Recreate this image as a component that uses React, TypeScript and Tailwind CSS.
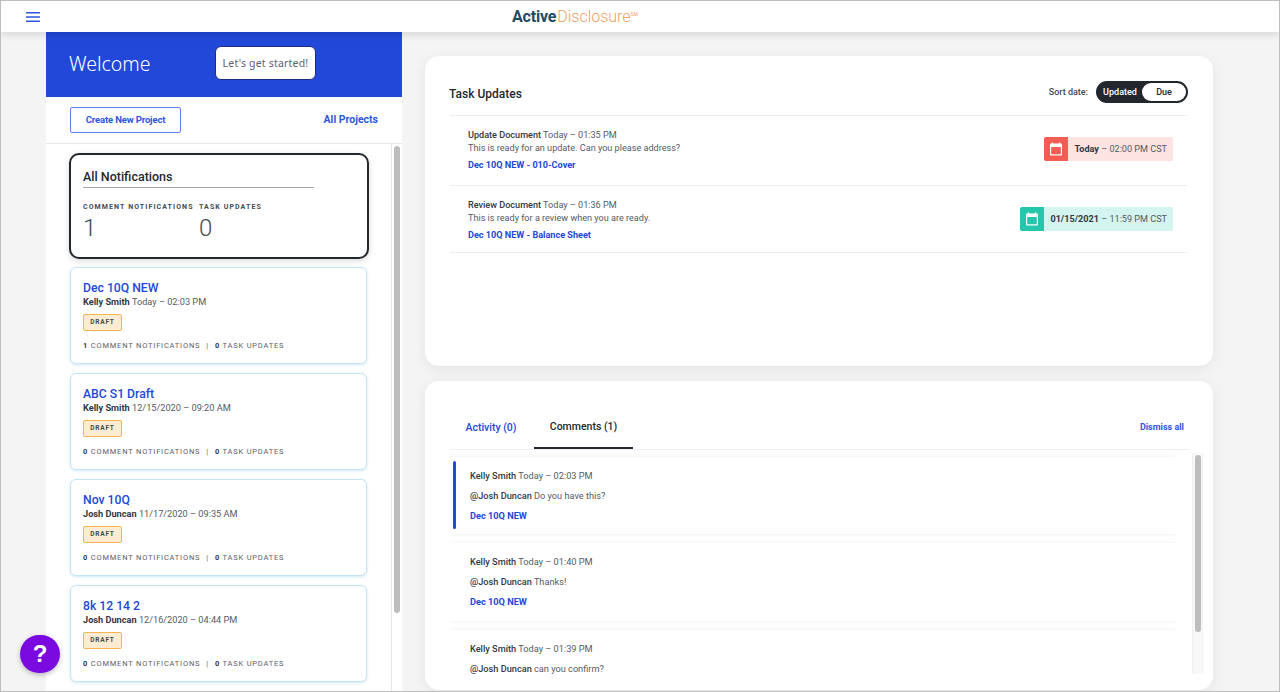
const PROJECTS = [
  { name: "Dec 10Q NEW", author: "Kelly Smith", date: "Today – 02:03 PM", comments: 1 },
  { name: "ABC S1 Draft", author: "Kelly Smith", date: "12/15/2020 – 09:20 AM", comments: 0 },
  { name: "Nov 10Q", author: "Josh Duncan", date: "11/17/2020 – 09:35 AM", comments: 0 },
  { name: "8k 12 14 2", author: "Josh Duncan", date: "12/16/2020 – 04:44 PM", comments: 0 },
];

const TASKS = [
  {
    title: "Update Document",
    date: "Today – 01:35 PM",
    text: "This is ready for an update. Can you please address?",
    link: "Dec 10Q NEW - 010-Cover",
    due: "Today",
    time: "02:00 PM CST",
    iconBg: "bg-[#f25c54] text-[#f25c54]",
    bg: "bg-[#fde3e1]",
  },
  {
    title: "Review Document",
    date: "Today – 01:36 PM",
    text: "This is ready for a review when you are ready.",
    link: "Dec 10Q NEW - Balance Sheet",
    due: "01/15/2021",
    time: "11:59 PM CST",
    iconBg: "bg-[#26c6ac] text-[#26c6ac]",
    bg: "bg-[#d3f4ef]",
  },
];

const COMMENTS = [
  { date: "Today – 02:03 PM", text: "Do you have this?", unread: true, link: "Dec 10Q NEW" },
  { date: "Today – 01:40 PM", text: "Thanks!", unread: false, link: "Dec 10Q NEW" },
  { date: "Today – 01:39 PM", text: "can you confirm?", unread: false, link: "" },
];

function CalendarIcon() {
  return (
    <svg viewBox="0 0 14 14" className="h-[14px] w-[14px]" fill="none">
      <path d="M3.5 0.5v2M10.5 0.5v2" stroke="white" strokeWidth="1.3" />
      <rect x="1" y="1.5" width="12" height="12" rx="1.2" fill="white" />
      <rect x="2.2" y="5" width="9.6" height="7.3" fill="currentColor" />
    </svg>
  );
}

function Scrollbar({ thumb, track }: { thumb: string; track: string }) {
  return (
    <div className={`shrink-0 ${track}`}>
      <div className={`rounded-[3px] bg-[#bdbdbd] ${thumb}`} />
    </div>
  );
}

export default function App() {
  return (
    <div className="relative flex h-[692px] w-[1280px] flex-col overflow-hidden border border-[#bdbdbd] bg-[#f4f4f4] font-['Roboto',sans-serif] text-[#23282f]">
      {/* Top bar */}
      <header className="relative z-10 flex h-[31px] shrink-0 items-center bg-white shadow-[0_2px_8px_rgba(0,0,0,0.14)]">
        <svg viewBox="0 0 14 10" className="ml-[25px] h-[10px] w-[14px]" fill="#2f55e0">
          <rect y="0" width="14" height="1.6" rx="0.4" />
          <rect y="4.2" width="14" height="1.6" rx="0.4" />
          <rect y="8.4" width="14" height="1.6" rx="0.4" />
        </svg>
        <div className="ml-[472px] mt-[1px] flex items-start text-[16px] leading-none tracking-[-0.2px]">
          <span className="font-bold text-[#1f4a60]">Active</span>
          <span className="ml-[1px] font-light tracking-normal text-[#f2a066]">Disclosure</span>
          <span className="mt-[3px] text-[5px] text-[#f2a066]">SM</span>
        </div>
      </header>

      <div className="flex min-h-0 flex-1">
        {/* Sidebar */}
        <aside className="ml-[45px] flex w-[356px] shrink-0 flex-col bg-white">
          <div className="flex h-[65px] shrink-0 items-center bg-[#2148d8] pl-[23px]">
            <span className="-mt-[2px] w-[146px] font-['Noto_Sans',sans-serif] text-[19.5px] font-light text-white">Welcome</span>
            <button className="-mt-[3px] flex h-[34px] w-[101px] items-center justify-center rounded-[6px] border border-[#1c2f7a] bg-white pt-[1px] font-['Noto_Sans',sans-serif] text-[10.5px] tracking-[0.2px] text-[#5a6275]">
              Let's get started!
            </button>
          </div>

          <div className="flex h-[47px] shrink-0 items-center justify-between border-b border-[#e8e8e8] pl-[24px] pr-[24px]">
            <button className="flex h-[26px] w-[111px] items-center justify-center rounded-[2px] border border-[#5f7ff0] text-[9.5px] font-bold tracking-[-0.15px] text-[#2f55e0]">
              Create New Project
            </button>
            <span className="text-[10.5px] font-bold text-[#2f55e0]">All Projects</span>
          </div>

          <div className="flex min-h-0 flex-1">
            <div className="flex min-w-0 flex-1 flex-col gap-[9px] overflow-hidden border-r border-[#e8e8e8] pl-[23px] pt-[9px]">
              <div className="-mb-[1px] h-[106px] w-[300px] shrink-0 rounded-[10px] border-2 border-[#23282f] bg-white pl-[12px] pt-[13px] shadow-[0_2px_6px_rgba(0,0,0,0.15)]">
                <div className="w-[231px] border-b border-[#aaaaaa] pb-[2px] text-[12.5px] font-medium leading-[17px]">
                  All Notifications
                </div>
                <div className="mt-[14px] flex text-[7px] font-bold leading-[10px] tracking-[1.1px] text-[#444a52]">
                  <div className="w-[116px]">
                    COMMENT NOTIFICATIONS
                    <div className="mt-[2px] text-[24px] font-light leading-[28px] tracking-normal">1</div>
                  </div>
                  <div>
                    TASK UPDATES
                    <div className="mt-[2px] text-[24px] font-light leading-[28px] tracking-normal">0</div>
                  </div>
                </div>
              </div>

              {PROJECTS.map((p) => (
                <div
                  key={p.name}
                  className="ml-[1px] h-[97px] w-[297px] shrink-0 rounded-[6px] border border-[#c4e5f6] bg-white pl-[12px] pt-[12px] shadow-[0_1px_3px_rgba(120,190,230,0.35)]"
                >
                  <div className="text-[12.2px] font-medium leading-[16px] text-[#2148d8]">{p.name}</div>
                  <div className="-mt-[1px] text-[9.2px] leading-[13px] text-[#555b63]">
                    <span className="font-bold text-[#33383f]">{p.author}</span> {p.date}
                  </div>
                  <div className="mt-[6px] flex h-[17px] w-[39px] items-center justify-center rounded-[2px] border border-[#f5b650] bg-[#fdecd2] pt-[1px] text-[6.5px] font-bold tracking-[0.8px] text-[#444a52]">
                    DRAFT
                  </div>
                  <div className="mt-[10px] text-[7.5px] leading-[10px] tracking-[0.8px] text-[#5a6068]">
                    <span className="font-bold text-[#33383f]">{p.comments}</span> COMMENT NOTIFICATIONS
                    <span className="mx-[6px]">|</span>
                    <span className="font-bold text-[#33383f]">0</span> TASK UPDATES
                  </div>
                </div>
              ))}
            </div>
            <Scrollbar track="w-[10px] pl-[2px] pt-[2px]" thumb="h-[467px] w-[6px]" />
          </div>
        </aside>

        {/* Right column */}
        <main className="ml-[23px] flex w-[788px] shrink-0 flex-col gap-[15px] pt-[24px]">
          <section className="h-[310px] shrink-0 rounded-[14px] bg-white px-[24px] pt-[25px] shadow-[0_3px_14px_rgba(0,0,0,0.07)]">
            <div className="flex h-[24px] items-center justify-between pr-[1px]">
              <h2 className="mt-[1px] text-[12px] font-medium">Task Updates</h2>
              <div className="-mt-[2px] flex items-center gap-[8px]">
                <span className="mt-[2px] text-[9px] font-medium text-[#444a52]">Sort date:</span>
                <div className="flex h-[22px] w-[92px] items-center rounded-full border-2 border-[#23282f] bg-[#23282f] text-[9px] font-medium">
                  <span className="w-[44px] pt-[1px] text-center text-white">Updated</span>
                  <span className="flex h-full flex-1 items-center justify-center rounded-full bg-white pt-[1px]">Due</span>
                </div>
              </div>
            </div>

            <div className="ml-[1px] mr-[1px] mt-[10px] border-t border-[#eeeeee]">
              {TASKS.map((t) => (
                <div key={t.title} className="flex h-[70px] items-start justify-between border-b border-[#eeeeee] pl-[18px] pr-[15px] pt-[13px] last:h-[67px]">
                  <div className="text-[9.1px] leading-[13px] text-[#555b63]">
                    <div>
                      <span className="font-medium text-[#33383f]">{t.title}</span> {t.date}
                    </div>
                    <div>{t.text}</div>
                    <div className="mt-[4px] font-bold text-[#2148d8]">{t.link}</div>
                  </div>
                  <div className={`mt-[8px] flex h-[24px] items-center overflow-hidden rounded-[2px] text-[9.1px] ${t.bg}`}>
                    <div className={`flex h-full w-[24px] items-center justify-center ${t.iconBg}`}>
                      <CalendarIcon />
                    </div>
                    <div className="px-[6px] pt-[1px] text-[#555b63]">
                      <span className="font-bold text-[#33383f]">{t.due}</span> – {t.time}
                    </div>
                  </div>
                </div>
              ))}
            </div>
          </section>

          <section className="h-[309px] shrink-0 rounded-[14px] bg-white pl-[25px] pr-[10px] pt-[25px] shadow-[0_3px_14px_rgba(0,0,0,0.07)]">
            <div className="mr-[14px] flex h-[44px] items-center justify-between border-b border-[#eeeeee] pr-[5px]">
              <div className="flex h-full items-stretch text-[10.5px] font-medium">
                <span className="flex w-[84px] items-center justify-center pr-[2px] text-[#2148d8]">Activity (0)</span>
                <span className="flex w-[99px] items-center justify-center border-b-2 border-[#23282f]">Comments (1)</span>
              </div>
              <span className="text-[9px] font-bold text-[#2f55e0]">Dismiss all</span>
            </div>

            <div className="flex h-[224px] pt-[3px]">
              <div className="flex w-[727px] shrink-0 flex-col gap-[9px] overflow-hidden pt-[4px]">
                {COMMENTS.map((c) => (
                  <div key={c.date} className="relative h-[77.25px] shrink-0 rounded-[2px] bg-white pl-[20px] pt-[12px] text-[9.2px] text-[#555b63] shadow-[0_0_4px_rgba(0,0,0,0.08)]">
                    {c.unread && <div className="absolute bottom-[5px] left-[3px] top-[4px] w-[3px] rounded-[2px] bg-[#2148d8]" />}
                    <div className="leading-[13px]">
                      <span className="font-medium text-[#33383f]">Kelly Smith</span> {c.date}
                    </div>
                    <div className="mt-[7px] leading-[13px]">
                      <span className="font-medium text-[#33383f]">@Josh Duncan</span> {c.text}
                    </div>
                    {c.link && <div className="mt-[7px] font-bold leading-[13px] text-[#2148d8]">{c.link}</div>}
                  </div>
                ))}
              </div>
              <Scrollbar
                track="ml-[15px] h-[221px] w-[11px] border-x border-[#f0f0f0] bg-[#f8f8f8] px-[2px] pt-[2px]"
                thumb="h-[177px] w-[6px]"
              />
            </div>
          </section>
        </main>
      </div>

      {/* Help button */}
      <div className="absolute left-[19px] top-[634px] flex h-[38px] w-[40px] items-center justify-center rounded-full bg-[#7a0ae0] font-['Liberation_Sans',sans-serif] text-[24px] font-bold text-white shadow-[0_2px_5px_rgba(0,0,0,0.25)]">
        ?
      </div>
    </div>
  );
}
